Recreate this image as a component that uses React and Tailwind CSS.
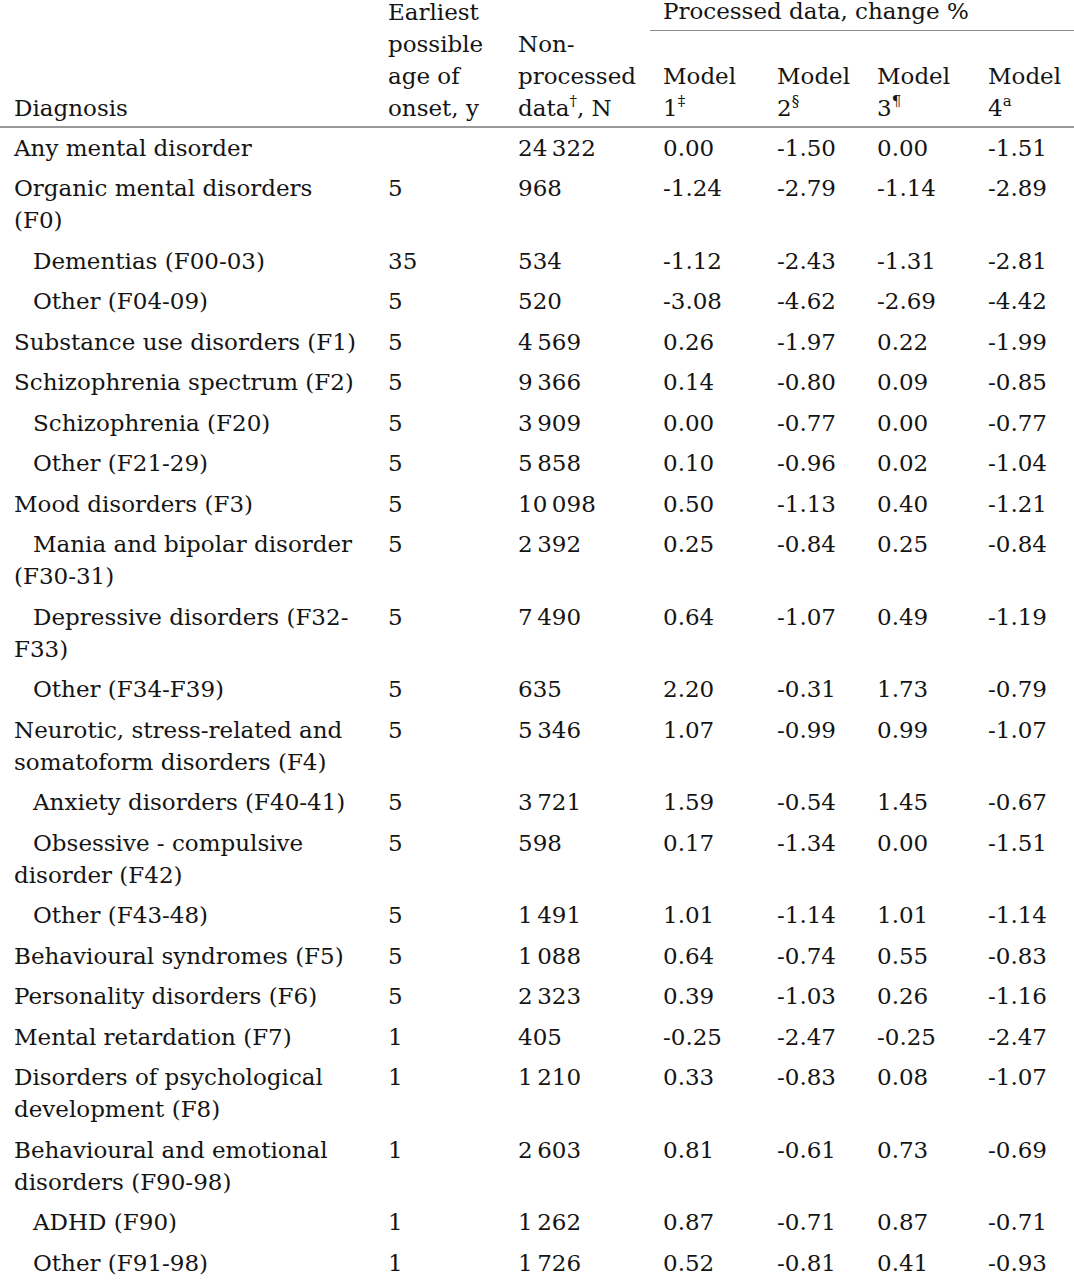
import React from "react";

const rows = [
  { d: ["Any mental disorder"], a: "", n: "24\u2009322", m: ["0.00", "-1.50", "0.00", "-1.51"] },
  { d: ["Organic mental disorders", "(F0)"], a: "5", n: "968", m: ["-1.24", "-2.79", "-1.14", "-2.89"] },
  { i: true, d: ["Dementias (F00-03)"], a: "35", n: "534", m: ["-1.12", "-2.43", "-1.31", "-2.81"] },
  { i: true, d: ["Other (F04-09)"], a: "5", n: "520", m: ["-3.08", "-4.62", "-2.69", "-4.42"] },
  { d: ["Substance use disorders (F1)"], a: "5", n: "4\u2009569", m: ["0.26", "-1.97", "0.22", "-1.99"] },
  { d: ["Schizophrenia spectrum (F2)"], a: "5", n: "9\u2009366", m: ["0.14", "-0.80", "0.09", "-0.85"] },
  { i: true, d: ["Schizophrenia (F20)"], a: "5", n: "3\u2009909", m: ["0.00", "-0.77", "0.00", "-0.77"] },
  { i: true, d: ["Other (F21-29)"], a: "5", n: "5\u2009858", m: ["0.10", "-0.96", "0.02", "-1.04"] },
  { d: ["Mood disorders (F3)"], a: "5", n: "10\u2009098", m: ["0.50", "-1.13", "0.40", "-1.21"] },
  { i: true, d: ["Mania and bipolar disorder", "(F30-31)"], a: "5", n: "2\u2009392", m: ["0.25", "-0.84", "0.25", "-0.84"] },
  { i: true, d: ["Depressive disorders (F32-", "F33)"], a: "5", n: "7\u2009490", m: ["0.64", "-1.07", "0.49", "-1.19"] },
  { i: true, d: ["Other (F34-F39)"], a: "5", n: "635", m: ["2.20", "-0.31", "1.73", "-0.79"] },
  { d: ["Neurotic, stress-related and", "somatoform disorders (F4)"], a: "5", n: "5\u2009346", m: ["1.07", "-0.99", "0.99", "-1.07"] },
  { i: true, d: ["Anxiety disorders (F40-41)"], a: "5", n: "3\u2009721", m: ["1.59", "-0.54", "1.45", "-0.67"] },
  { i: true, d: ["Obsessive - compulsive", "disorder (F42)"], a: "5", n: "598", m: ["0.17", "-1.34", "0.00", "-1.51"] },
  { i: true, d: ["Other (F43-48)"], a: "5", n: "1\u2009491", m: ["1.01", "-1.14", "1.01", "-1.14"] },
  { d: ["Behavioural syndromes (F5)"], a: "5", n: "1\u2009088", m: ["0.64", "-0.74", "0.55", "-0.83"] },
  { d: ["Personality disorders (F6)"], a: "5", n: "2\u2009323", m: ["0.39", "-1.03", "0.26", "-1.16"] },
  { d: ["Mental retardation (F7)"], a: "1", n: "405", m: ["-0.25", "-2.47", "-0.25", "-2.47"] },
  { d: ["Disorders of psychological", "development (F8)"], a: "1", n: "1\u2009210", m: ["0.33", "-0.83", "0.08", "-1.07"] },
  { d: ["Behavioural and emotional", "disorders (F90-98)"], a: "1", n: "2\u2009603", m: ["0.81", "-0.61", "0.73", "-0.69"] },
  { i: true, d: ["ADHD (F90)"], a: "1", n: "1\u2009262", m: ["0.87", "-0.71", "0.87", "-0.71"] },
  { i: true, d: ["Other (F91-98)"], a: "1", n: "1\u2009726", m: ["0.52", "-0.81", "0.41", "-0.93"] },
];

function Sup({ children }) {
  return <sup className="text-[15px] relative -top-[1px] align-super leading-none">{children}</sup>;
}

function Lines({ lines }) {
  return lines.map((l, k) => (
    <React.Fragment key={k}>
      {k > 0 && <br />}
      {l}
    </React.Fragment>
  ));
}

export default function App() {
  const cell = "pl-[13px] pt-[4px] pb-[4.5px] align-top whitespace-nowrap";
  return (
    <div className="bg-white w-[1074px] h-[1280px] overflow-hidden text-[#141414]" style={{ fontFamily: '"DejaVu Serif", serif' }}>
      <table className="w-[1074px] table-fixed border-collapse -mt-[5px] text-[23px] leading-[32px]">
        <colgroup>
          <col className="w-[375px]" />
          <col className="w-[130px]" />
          <col className="w-[145px]" />
          <col className="w-[114px]" />
          <col className="w-[100px]" />
          <col className="w-[111px]" />
          <col className="w-[99px]" />
        </colgroup>
        <thead>
          <tr>
            <th rowSpan={2} className="pl-[14px] pb-[2px] align-bottom text-left font-normal border-b-2 border-[#9a9a9a]">Diagnosis</th>
            <th rowSpan={2} className="pl-[13px] pb-[2px] align-bottom text-left font-normal border-b-2 border-[#9a9a9a]">
              Earliest<br />possible<br />age of<br />onset, y
            </th>
            <th rowSpan={2} className="pl-[13px] pb-[2px] align-bottom text-left font-normal border-b-2 border-[#9a9a9a]">
              Non-<br />processed<br />data<Sup>†</Sup>, N
            </th>
            <th colSpan={4} className="pl-[13px] pb-[2px] h-[35px] align-top text-left font-normal border-b border-[#8a8a8a] whitespace-nowrap">
              Processed data, change %
            </th>
          </tr>
          <tr>
            {[["1", "‡"], ["2", "§"], ["3", "¶"], ["4", "a"]].map(([n, s]) => (
              <th key={n} className="pl-[13px] pt-[29px] pb-[2px] align-top text-left font-normal border-b-2 border-[#9a9a9a]">
                Model<br />{n}<Sup>{s}</Sup>
              </th>
            ))}
          </tr>
        </thead>
        <tbody>
          {rows.map((r, idx) => (
            <tr key={idx}>
              <td className={`pl-[14px] pt-[4px] pb-[4.5px] align-top whitespace-nowrap ${r.i ? "indent-[19px]" : ""}`}>
                <Lines lines={r.d} />
              </td>
              <td className={cell}>{r.a}</td>
              <td className={cell}>{r.n}</td>
              {r.m.map((v, j) => (
                <td key={j} className={cell}>{v}</td>
              ))}
            </tr>
          ))}
        </tbody>
      </table>
    </div>
  );
}
